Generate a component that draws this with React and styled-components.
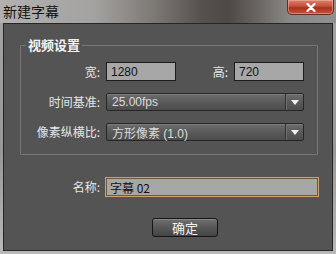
import React from 'react';
import styled, { createGlobalStyle } from 'styled-components';

const GlobalStyle = createGlobalStyle`
  html, body {
    margin: 0;
    padding: 0;
    background: #9c9c9c;
  }
  body {
    font-family: "Noto Sans CJK SC", "Liberation Sans", sans-serif;
  }
`;

const Window = styled.div`
  width: 336px;
  height: 254px;
  display: flex;
  flex-direction: column;
  background: linear-gradient(180deg, #a6a4a2 0%, #9a9896 60%, #b9b9b9 100%);
  overflow: hidden;
`;

const TitleBar = styled.div`
  height: 23px;
  flex: none;
  display: flex;
  justify-content: space-between;
  align-items: flex-start;
  background: linear-gradient(
    90deg,
    #b3b1af 0%,
    #a4a2a0 28%,
    #7c7874 46%,
    #56514e 60%,
    #4e4946 68%,
    #67635f 76%,
    #8a8886 86%,
    #919090 100%
  );
`;

const Title = styled.span`
  font-size: 14px;
  line-height: 14px;
  color: #111;
  padding: 4px 0 0 3px;
`;

const CloseButton = styled.div`
  width: 45px;
  height: 14px;
  margin-right: 2px;
  display: flex;
  align-items: center;
  justify-content: center;
  border: 1px solid #6b2a1f;
  border-top: none;
  border-radius: 0 0 5px 5px;
  background: linear-gradient(180deg, #d9826f 0%, #c5503b 45%, #a8301c 55%, #c4543d 100%);
  box-shadow: inset 0 0 0 1px rgba(255, 200, 180, 0.45);
`;

const Client = styled.div`
  flex: 1;
  margin: 0 3px 3px 3px;
  background: #545454;
  border: 1px solid #262626;
  padding: 14px 0 0 16px;
  display: flex;
  flex-direction: column;
`;

const Group = styled.fieldset`
  width: 297px;
  box-sizing: border-box;
  margin: 0;
  padding: 10px 13px 13px 0;
  border: 1px solid #777;
  border-radius: 1px;
  display: flex;
  flex-direction: column;
  gap: 12px;
`;

const Legend = styled.legend`
  margin-left: 5px;
  padding: 0 2px;
  font-size: 13px;
  line-height: 14px;
  font-weight: bold;
  color: #f2f2f2;
`;

const Row = styled.div`
  display: flex;
  align-items: center;
  gap: ${(p) => p.$gap || 6}px;
`;

const Label = styled.span`
  width: ${(p) => (p.$width ? `${p.$width}px` : 'auto')};
  flex: ${(p) => (p.$grow ? 1 : 'none')};
  text-align: right;
  font-size: 12px;
  line-height: 14px;
  color: #e6e6e6;
  white-space: nowrap;
`;

const TextField = styled.div`
  width: ${(p) => p.$width}px;
  height: ${(p) => p.$height || 19}px;
  box-sizing: border-box;
  background: #a7a7a7;
  border: 1px solid ${(p) => (p.$focused ? '#c9a466' : '#1c1c1c')};
  box-shadow: ${(p) => (p.$focused ? 'inset 0 0 0 1px #6d5a3a' : 'none')};
  display: flex;
  align-items: center;
  padding-left: 4px;
  font-family: "Liberation Sans", "Noto Sans CJK SC", sans-serif;
  font-size: 12px;
  color: #111;
`;

const NameText = styled.span`
  font-family: "Noto Sans CJK SC", sans-serif;
  font-size: 12px;
`;

const Select = styled.div`
  width: 198px;
  height: 18px;
  box-sizing: border-box;
  display: flex;
  align-items: stretch;
  border: 1px solid #262626;
  border-radius: 2px;
  background: linear-gradient(180deg, #6c6c6c 0%, #5a5a5a 50%, #4c4c4c 100%);
  box-shadow: inset 0 1px 0 #7d7d7d;
`;

const SelectValue = styled.span`
  flex: 1;
  display: flex;
  align-items: center;
  padding-left: 5px;
  font-family: "Liberation Sans", "Noto Sans CJK SC", sans-serif;
  font-size: 12px;
  color: #dcdcdc;
`;

const ArrowBox = styled.span`
  width: 17px;
  display: flex;
  align-items: center;
  justify-content: center;
  border-left: 1px solid #343434;
  box-shadow: inset 1px 0 0 #6e6e6e;
`;

const Arrow = styled.span`
  width: 0;
  height: 0;
  border-left: 4px solid transparent;
  border-right: 4px solid transparent;
  border-top: 5px solid #f0f0f0;
`;

const NameRow = styled(Row)`
  margin-top: 22px;
`;

const ButtonRow = styled.div`
  display: flex;
  padding-left: 132px;
  margin-top: 21px;
`;

const Button = styled.div`
  width: 66px;
  height: 19px;
  box-sizing: border-box;
  display: flex;
  align-items: center;
  justify-content: center;
  border: 1px solid #151515;
  border-radius: 3px;
  background: linear-gradient(180deg, #707070 0%, #5a5a5a 45%, #444 100%);
  box-shadow: inset 0 1px 0 #8a8a8a;
  font-size: 13px;
  color: #f4f4f4;
`;

const SelectField = ({ value }) => (
  <Select>
    <SelectValue>{value}</SelectValue>
    <ArrowBox>
      <Arrow />
    </ArrowBox>
  </Select>
);

const App = () => {
  return (
    <Window>
      <GlobalStyle />
      <TitleBar>
        <Title>新建字幕</Title>
        <CloseButton>
          <svg width="10" height="9" viewBox="0 0 10 9">
            <path d="M1.5 1 L8.5 8 M8.5 1 L1.5 8" stroke="#fff" strokeWidth="2.2" strokeLinecap="round" />
          </svg>
        </CloseButton>
      </TitleBar>
      <Client>
        <Group>
          <Legend>视频设置</Legend>
          <Row>
            <Label $width={79}>宽:</Label>
            <TextField $width={70}>1280</TextField>
            <Label $grow>高:</Label>
            <TextField $width={70}>720</TextField>
          </Row>
          <Row>
            <Label $width={79}>时间基准:</Label>
            <SelectField value="25.00fps" />
          </Row>
          <Row>
            <Label $width={79}>像素纵横比:</Label>
            <SelectField value="方形像素 (1.0)" />
          </Row>
        </Group>
        <NameRow $gap={5}>
          <Label $width={80}>名称:</Label>
          <TextField $width={214} $height={20} $focused>
            <NameText>字幕 02</NameText>
          </TextField>
        </NameRow>
        <ButtonRow>
          <Button>确定</Button>
        </ButtonRow>
      </Client>
    </Window>
  );
};

export default App;
